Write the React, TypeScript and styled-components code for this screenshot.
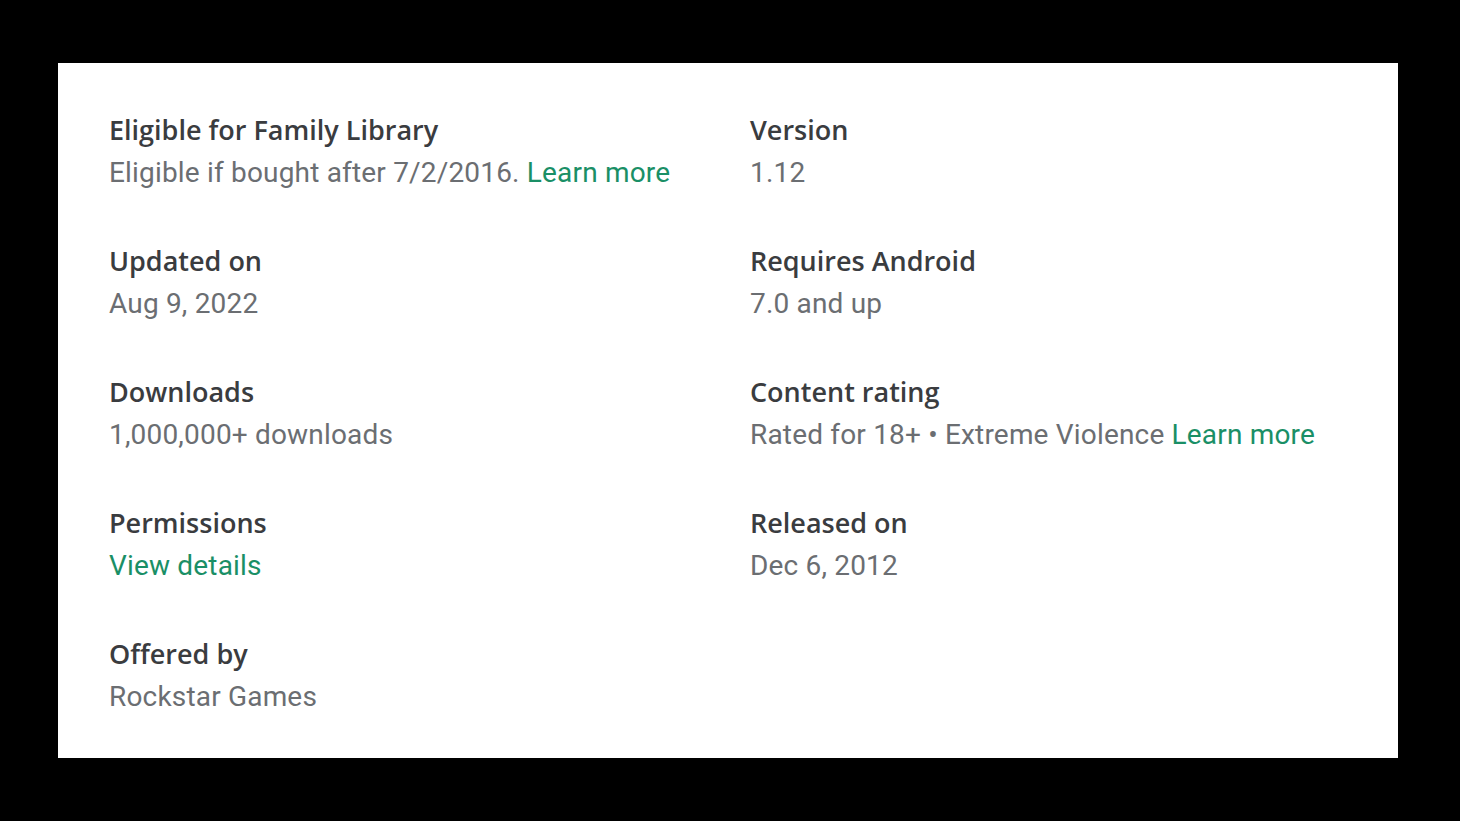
import styled, { createGlobalStyle } from 'styled-components'

const GlobalStyle = createGlobalStyle`
  html, body {
    margin: 0;
    padding: 0;
    background: #000;
  }
`

const Page = styled.div`
  width: 1460px;
  height: 821px;
  background: #000;
  padding: 63px 62px 63px 58px;
  box-sizing: border-box;
`

const Card = styled.section`
  background: #fff;
  height: 695px;
  box-sizing: border-box;
  padding: 46px 40px 0 51px;
  display: grid;
  grid-template-columns: 641px 1fr;
  grid-auto-rows: 86px;
  row-gap: 45px;
`

const Item = styled.div`
  display: flex;
  flex-direction: column;
`

const Label = styled.div`
  font-family: 'Open Sans', 'Noto Sans', sans-serif;
  font-weight: 600;
  font-size: 27px;
  line-height: 41px;
  color: #3a3c3f;
`

const Value = styled.div`
  font-family: Roboto, 'Noto Sans', sans-serif;
  font-size: 28px;
  line-height: 45px;
  letter-spacing: 0.18px;
  color: #6b6e72;
  white-space: nowrap;
`

const Link = styled.span`
  color: #1a8f66;
`

type Info = { label: string; value?: string; link?: string }

const ITEMS: Info[] = [
  { label: 'Eligible for Family Library', value: 'Eligible if bought after 7/2/2016. ', link: 'Learn more' },
  { label: 'Version', value: '1.12' },
  { label: 'Updated on', value: 'Aug 9, 2022' },
  { label: 'Requires Android', value: '7.0 and up' },
  { label: 'Downloads', value: '1,000,000+ downloads' },
  { label: 'Content rating', value: 'Rated for 18+ • Extreme Violence ', link: 'Learn more' },
  { label: 'Permissions', link: 'View details' },
  { label: 'Released on', value: 'Dec 6, 2012' },
  { label: 'Offered by', value: 'Rockstar Games' },
]

export default function App() {
  return (
    <>
      <GlobalStyle />
      <Page>
        <Card>
          {ITEMS.map((item) => (
            <Item key={item.label}>
              <Label>{item.label}</Label>
              <Value>
                {item.value}
                {item.link && <Link>{item.link}</Link>}
              </Value>
            </Item>
          ))}
        </Card>
      </Page>
    </>
  )
}
